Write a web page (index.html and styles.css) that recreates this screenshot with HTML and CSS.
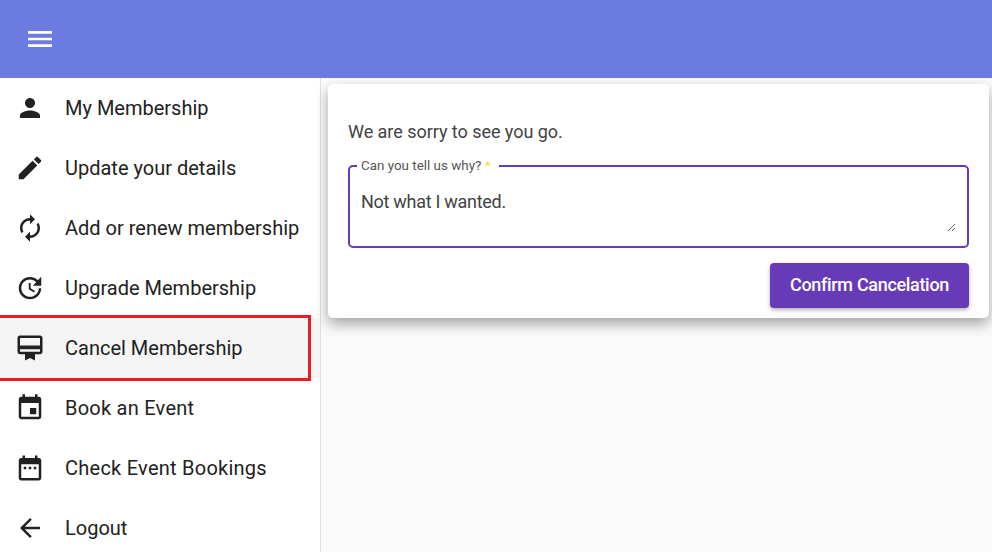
FILE: index.html
```html
<!DOCTYPE html>
<html lang="en">
<head>
  <meta charset="UTF-8">
  <meta name="viewport" content="width=device-width, initial-scale=1.0">
  <title>Cancel Membership</title>
  <link rel="stylesheet" href="styles.css">
</head>
<body>
  <!-- Header -->
  <header class="topbar">
    <svg class="menu-icon" viewBox="0 0 24 24"><path d="M3 18h18v-2H3v2zm0-5h18v-2H3v2zm0-7v2h18V6H3z"/></svg>
  </header>

  <div class="layout">
    <!-- Sidebar -->
    <nav class="sidebar">
      <a class="nav-item" href="#">
        <svg class="nav-icon" viewBox="0 0 24 24"><path d="M12 12c2.21 0 4-1.79 4-4s-1.79-4-4-4-4 1.79-4 4 1.79 4 4 4zm0 2c-2.67 0-8 1.34-8 4v2h16v-2c0-2.66-5.33-4-8-4z"/></svg>
        <span>My Membership</span>
      </a>
      <a class="nav-item" href="#">
        <svg class="nav-icon" viewBox="0 0 24 24"><path d="M3 17.25V21h3.75L17.81 9.94l-3.75-3.75L3 17.25zM20.71 7.04c.39-.39.39-1.02 0-1.41l-2.34-2.34c-.39-.39-1.02-.39-1.41 0l-1.83 1.83 3.75 3.75 1.83-1.83z"/></svg>
        <span>Update your details</span>
      </a>
      <a class="nav-item" href="#">
        <svg class="nav-icon" viewBox="0 0 24 24"><path d="M12 6v3l4-4-4-4v3c-4.42 0-8 3.58-8 8 0 1.57.46 3.03 1.24 4.26L6.7 14.8c-.45-.83-.7-1.79-.7-2.8 0-3.31 2.69-6 6-6zm6.76 1.74L17.3 9.2c.44.84.7 1.79.7 2.8 0 3.31-2.69 6-6 6v-3l-4 4 4 4v-3c4.42 0 8-3.58 8-8 0-1.57-.46-3.03-1.24-4.26z"/></svg>
        <span>Add or renew membership</span>
      </a>
      <a class="nav-item" href="#">
        <svg class="nav-icon" viewBox="0 0 24 24"><path d="M21 10.12h-6.78l2.74-2.82c-2.73-2.7-7.15-2.8-9.88-.1-2.73 2.71-2.73 7.08 0 9.79s7.15 2.71 9.88 0C18.32 15.65 19 14.08 19 12.1h2c0 1.98-.88 4.55-2.64 6.29-3.51 3.48-9.21 3.48-12.72 0-3.5-3.47-3.53-9.11-.02-12.58s9.14-3.47 12.65 0L21 3v7.12zM12.5 8v4.25l3.5 2.08-.72 1.21L11 13V8h1.5z"/></svg>
        <span>Upgrade Membership</span>
      </a>
      <a class="nav-item active" href="#">
        <svg class="nav-icon" viewBox="0 0 24 24"><path d="M20 2H4c-1.11 0-2 .89-2 2v11c0 1.11.89 2 2 2h4v5l4-2 4 2v-5h4c1.11 0 2-.89 2-2V4c0-1.11-.89-2-2-2zm0 13H4v-2h16v2zm0-5H4V4h16v6z"/></svg>
        <span>Cancel Membership</span>
      </a>
      <a class="nav-item wide" href="#">
        <svg class="nav-icon" viewBox="0 0 24 24"><path d="M17 12h-5v5h5v-5zM16 1v2H8V1H6v2H5c-1.11 0-1.99.9-1.99 2L3 19c0 1.1.89 2 2 2h14c1.1 0 2-.9 2-2V5c0-1.1-.9-2-2-2h-1V1h-2zm3 18H5V8h14v11z"/></svg>
        <span>Book an Event</span>
      </a>
      <a class="nav-item wide" href="#">
        <svg class="nav-icon" viewBox="0 0 24 24"><path d="M9 11H7v2h2v-2zm4 0h-2v2h2v-2zm4 0h-2v2h2v-2zm2-7h-1V2h-2v2H8V2H6v2H5c-1.11 0-1.99.9-1.99 2L3 20c0 1.1.89 2 2 2h14c1.1 0 2-.9 2-2V6c0-1.1-.9-2-2-2zm0 16H5V9h14v11z"/></svg>
        <span>Check Event Bookings</span>
      </a>
      <a class="nav-item" href="#">
        <svg class="nav-icon" viewBox="0 0 24 24"><path d="M20 11H7.83l5.59-5.59L12 4l-8 8 8 8 1.41-1.41L7.83 13H20v-2z"/></svg>
        <span>Logout</span>
      </a>
    </nav>

    <!-- Cancel form -->
    <main class="content">
      <section class="card">
        <p class="card-text">We are sorry to see you go.</p>
        <fieldset class="reason-field">
          <legend class="reason-label">Can you tell us why? <span class="required">*</span></legend>
          <textarea class="reason-input" rows="2">Not what I wanted.</textarea>
        </fieldset>
        <div class="card-actions">
          <button class="confirm-btn">Confirm Cancelation</button>
        </div>
      </section>
    </main>
  </div>
</body>
</html>
```

FILE: styles.css
```css
html, body {
  height: 100%;
}
body {
  font-family: Roboto, Arial, sans-serif;
  margin: 0;
  background-color: #fafafa;
  color: #212121;
  overflow: hidden;
}
.topbar {
  height: 78px;
  background-color: #6b7be0;
  display: flex;
  align-items: center;
  padding-left: 24px;
}
.menu-icon {
  width: 32px;
  height: 32px;
  fill: #fff;
}
.layout {
  display: flex;
  height: 474px;
}
.sidebar {
  flex: 0 0 320px;
  background-color: #fff;
  border-right: 1px solid #e0e0e0;
}
.nav-item {
  position: relative;
  height: 60px;
  display: flex;
  align-items: center;
  gap: 20px;
  padding-left: 15px;
  font-size: 20px;
  color: #212121;
  text-decoration: none;
}
.nav-item.wide {
  letter-spacing: 0.25px;
}
.nav-item.active {
  background-color: #f5f5f5;
}
.nav-item.active::after {
  content: "";
  position: absolute;
  left: -3px;
  top: -3px;
  width: 308px;
  height: 60px;
  border: 3px solid #ed1c24;
}
.nav-icon {
  width: 30px;
  height: 30px;
  fill: #212121;
  flex-shrink: 0;
}
.content {
  flex: 1;
  padding: 6px 3px 0 7px;
}
.card {
  background-color: #fff;
  border-radius: 5px;
  box-shadow: 0 6px 14px rgba(0, 0, 0, 0.35);
  padding: 37px 20px 10px;
}
.card-text {
  margin: 0 0 15px;
  font-size: 18px;
  line-height: 22px;
  color: #424242;
  letter-spacing: -0.04px;
}
.reason-field {
  margin: 0;
  padding: 0 11px 14px;
  border: 2px solid #673ab7;
  border-radius: 5px;
  min-width: 0;
}
.reason-label {
  padding: 0 9px 0 4px;
  margin-left: -4px;
  font-size: 13.4px;
  line-height: 16px;
  color: #555;
}
.required {
  color: #fdd835;
}
.reason-input {
  display: block;
  width: 100%;
  box-sizing: border-box;
  height: 58px;
  padding: 17px 0 0;
  border: none;
  outline: none;
  resize: vertical;
  font-family: Roboto, Arial, sans-serif;
  font-size: 18px;
  line-height: 22px;
  letter-spacing: -0.28px;
  color: #424242;
  background: transparent;
}
.card-actions {
  display: flex;
  justify-content: flex-end;
  margin-top: 15px;
}
.confirm-btn {
  width: 199px;
  height: 45px;
  padding: 0 0 2px;
  background-color: #673ab7;
  color: #fff;
  border: none;
  border-radius: 4px;
  box-shadow: 0 2px 4px rgba(0, 0, 0, 0.3);
  font-family: Roboto, Arial, sans-serif;
  font-size: 18px;
  font-weight: 500;
  letter-spacing: -0.32px;
  cursor: pointer;
}
```
